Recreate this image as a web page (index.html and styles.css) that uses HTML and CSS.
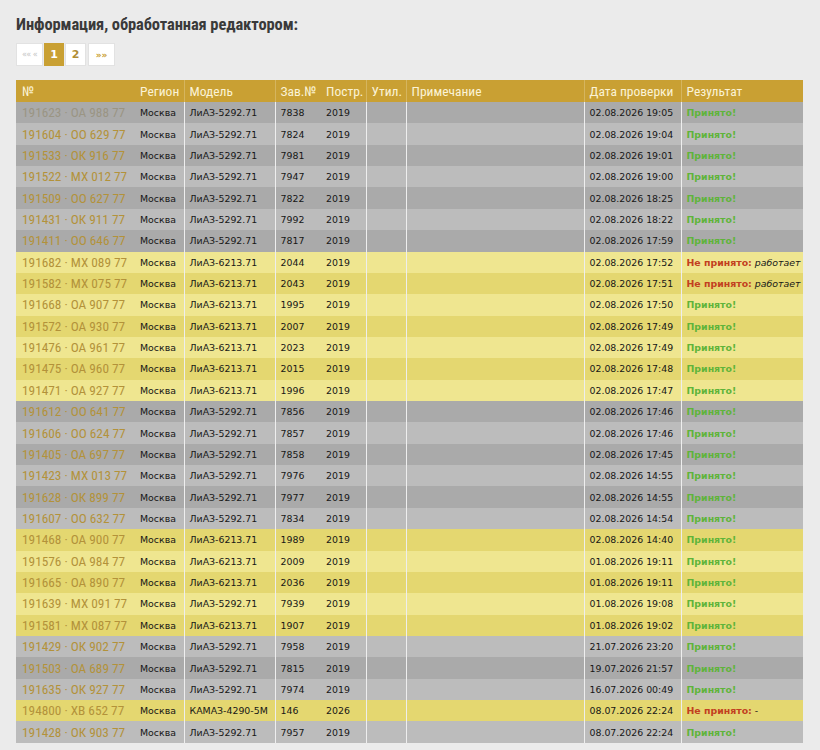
FILE: index.html
```html
<!DOCTYPE html>
<html lang="ru">
<head>
<meta charset="utf-8">
<title>Информация, обработанная редактором</title>
<link rel="stylesheet" href="styles.css">
</head>
<body>
<h2 class="title">Информация, обработанная редактором:</h2>
<div class="pager">
  <span class="pg pg-off">«« «</span>
  <span class="pg pg-cur">1</span>
  <a class="pg pg-num" href="#">2</a>
  <a class="pg pg-next" href="#">»»</a>
</div>
<table class="grid">
  <colgroup>
    <col class="c-no"><col class="c-reg"><col class="c-mod"><col class="c-zav"><col class="c-year"><col class="c-util"><col class="c-note"><col class="c-date"><col class="c-res">
  </colgroup>
  <thead>
    <tr><th>№</th><th>Регион</th><th class="sep">Модель</th><th class="sep">Зав.№</th><th>Постр.</th><th class="sep">Утил.</th><th class="sep">Примечание</th><th class="sep">Дата проверки</th><th class="sep">Результат</th></tr>
  </thead>
  <tbody>
    <tr class="g d"><td class="no"><a class="visited" href="#">191623 · ОА 988 77</a></td><td>Москва</td><td class="sep">ЛиАЗ-5292.71</td><td class="sep">7838</td><td>2019</td><td class="sep"></td><td class="sep"></td><td class="sep">02.08.2026 19:05</td><td class="sep ok">Принято!</td></tr>
    <tr class="g l"><td class="no"><a href="#">191604 · ОО 629 77</a></td><td>Москва</td><td class="sep">ЛиАЗ-5292.71</td><td class="sep">7824</td><td>2019</td><td class="sep"></td><td class="sep"></td><td class="sep">02.08.2026 19:04</td><td class="sep ok">Принято!</td></tr>
    <tr class="g d"><td class="no"><a href="#">191533 · ОК 916 77</a></td><td>Москва</td><td class="sep">ЛиАЗ-5292.71</td><td class="sep">7981</td><td>2019</td><td class="sep"></td><td class="sep"></td><td class="sep">02.08.2026 19:01</td><td class="sep ok">Принято!</td></tr>
    <tr class="g l"><td class="no"><a href="#">191522 · МХ 012 77</a></td><td>Москва</td><td class="sep">ЛиАЗ-5292.71</td><td class="sep">7947</td><td>2019</td><td class="sep"></td><td class="sep"></td><td class="sep">02.08.2026 19:00</td><td class="sep ok">Принято!</td></tr>
    <tr class="g d"><td class="no"><a href="#">191509 · ОО 627 77</a></td><td>Москва</td><td class="sep">ЛиАЗ-5292.71</td><td class="sep">7822</td><td>2019</td><td class="sep"></td><td class="sep"></td><td class="sep">02.08.2026 18:25</td><td class="sep ok">Принято!</td></tr>
    <tr class="g l"><td class="no"><a href="#">191431 · ОК 911 77</a></td><td>Москва</td><td class="sep">ЛиАЗ-5292.71</td><td class="sep">7992</td><td>2019</td><td class="sep"></td><td class="sep"></td><td class="sep">02.08.2026 18:22</td><td class="sep ok">Принято!</td></tr>
    <tr class="g d"><td class="no"><a href="#">191411 · ОО 646 77</a></td><td>Москва</td><td class="sep">ЛиАЗ-5292.71</td><td class="sep">7817</td><td>2019</td><td class="sep"></td><td class="sep"></td><td class="sep">02.08.2026 17:59</td><td class="sep ok">Принято!</td></tr>
    <tr class="y l"><td class="no"><a href="#">191682 · МХ 089 77</a></td><td>Москва</td><td class="sep">ЛиАЗ-6213.71</td><td class="sep">2044</td><td>2019</td><td class="sep"></td><td class="sep"></td><td class="sep">02.08.2026 17:52</td><td class="sep"><b class="no-ok">Не принято:</b> <i>работает</i></td></tr>
    <tr class="y d"><td class="no"><a href="#">191582 · МХ 075 77</a></td><td>Москва</td><td class="sep">ЛиАЗ-6213.71</td><td class="sep">2043</td><td>2019</td><td class="sep"></td><td class="sep"></td><td class="sep">02.08.2026 17:51</td><td class="sep"><b class="no-ok">Не принято:</b> <i>работает</i></td></tr>
    <tr class="y l"><td class="no"><a href="#">191668 · ОА 907 77</a></td><td>Москва</td><td class="sep">ЛиАЗ-6213.71</td><td class="sep">1995</td><td>2019</td><td class="sep"></td><td class="sep"></td><td class="sep">02.08.2026 17:50</td><td class="sep ok">Принято!</td></tr>
    <tr class="y d"><td class="no"><a href="#">191572 · ОА 930 77</a></td><td>Москва</td><td class="sep">ЛиАЗ-6213.71</td><td class="sep">2007</td><td>2019</td><td class="sep"></td><td class="sep"></td><td class="sep">02.08.2026 17:49</td><td class="sep ok">Принято!</td></tr>
    <tr class="y l"><td class="no"><a href="#">191476 · ОА 961 77</a></td><td>Москва</td><td class="sep">ЛиАЗ-6213.71</td><td class="sep">2023</td><td>2019</td><td class="sep"></td><td class="sep"></td><td class="sep">02.08.2026 17:49</td><td class="sep ok">Принято!</td></tr>
    <tr class="y d"><td class="no"><a href="#">191475 · ОА 960 77</a></td><td>Москва</td><td class="sep">ЛиАЗ-6213.71</td><td class="sep">2015</td><td>2019</td><td class="sep"></td><td class="sep"></td><td class="sep">02.08.2026 17:48</td><td class="sep ok">Принято!</td></tr>
    <tr class="y l"><td class="no"><a href="#">191471 · ОА 927 77</a></td><td>Москва</td><td class="sep">ЛиАЗ-6213.71</td><td class="sep">1996</td><td>2019</td><td class="sep"></td><td class="sep"></td><td class="sep">02.08.2026 17:47</td><td class="sep ok">Принято!</td></tr>
    <tr class="g d"><td class="no"><a href="#">191612 · ОО 641 77</a></td><td>Москва</td><td class="sep">ЛиАЗ-5292.71</td><td class="sep">7856</td><td>2019</td><td class="sep"></td><td class="sep"></td><td class="sep">02.08.2026 17:46</td><td class="sep ok">Принято!</td></tr>
    <tr class="g l"><td class="no"><a href="#">191606 · ОО 624 77</a></td><td>Москва</td><td class="sep">ЛиАЗ-5292.71</td><td class="sep">7857</td><td>2019</td><td class="sep"></td><td class="sep"></td><td class="sep">02.08.2026 17:46</td><td class="sep ok">Принято!</td></tr>
    <tr class="g d"><td class="no"><a href="#">191405 · ОА 697 77</a></td><td>Москва</td><td class="sep">ЛиАЗ-5292.71</td><td class="sep">7858</td><td>2019</td><td class="sep"></td><td class="sep"></td><td class="sep">02.08.2026 17:45</td><td class="sep ok">Принято!</td></tr>
    <tr class="g l"><td class="no"><a href="#">191423 · МХ 013 77</a></td><td>Москва</td><td class="sep">ЛиАЗ-5292.71</td><td class="sep">7976</td><td>2019</td><td class="sep"></td><td class="sep"></td><td class="sep">02.08.2026 14:55</td><td class="sep ok">Принято!</td></tr>
    <tr class="g d"><td class="no"><a href="#">191628 · ОК 899 77</a></td><td>Москва</td><td class="sep">ЛиАЗ-5292.71</td><td class="sep">7977</td><td>2019</td><td class="sep"></td><td class="sep"></td><td class="sep">02.08.2026 14:55</td><td class="sep ok">Принято!</td></tr>
    <tr class="g l"><td class="no"><a href="#">191607 · ОО 632 77</a></td><td>Москва</td><td class="sep">ЛиАЗ-5292.71</td><td class="sep">7834</td><td>2019</td><td class="sep"></td><td class="sep"></td><td class="sep">02.08.2026 14:54</td><td class="sep ok">Принято!</td></tr>
    <tr class="y d"><td class="no"><a href="#">191468 · ОА 900 77</a></td><td>Москва</td><td class="sep">ЛиАЗ-6213.71</td><td class="sep">1989</td><td>2019</td><td class="sep"></td><td class="sep"></td><td class="sep">02.08.2026 14:40</td><td class="sep ok">Принято!</td></tr>
    <tr class="y l"><td class="no"><a href="#">191576 · ОА 984 77</a></td><td>Москва</td><td class="sep">ЛиАЗ-6213.71</td><td class="sep">2009</td><td>2019</td><td class="sep"></td><td class="sep"></td><td class="sep">01.08.2026 19:11</td><td class="sep ok">Принято!</td></tr>
    <tr class="y d"><td class="no"><a href="#">191665 · ОА 890 77</a></td><td>Москва</td><td class="sep">ЛиАЗ-6213.71</td><td class="sep">2036</td><td>2019</td><td class="sep"></td><td class="sep"></td><td class="sep">01.08.2026 19:11</td><td class="sep ok">Принято!</td></tr>
    <tr class="y l"><td class="no"><a href="#">191639 · МХ 091 77</a></td><td>Москва</td><td class="sep">ЛиАЗ-5292.71</td><td class="sep">7939</td><td>2019</td><td class="sep"></td><td class="sep"></td><td class="sep">01.08.2026 19:08</td><td class="sep ok">Принято!</td></tr>
    <tr class="y d"><td class="no"><a href="#">191581 · МХ 087 77</a></td><td>Москва</td><td class="sep">ЛиАЗ-6213.71</td><td class="sep">1907</td><td>2019</td><td class="sep"></td><td class="sep"></td><td class="sep">01.08.2026 19:02</td><td class="sep ok">Принято!</td></tr>
    <tr class="g l"><td class="no"><a href="#">191429 · ОК 902 77</a></td><td>Москва</td><td class="sep">ЛиАЗ-5292.71</td><td class="sep">7958</td><td>2019</td><td class="sep"></td><td class="sep"></td><td class="sep">21.07.2026 23:20</td><td class="sep ok">Принято!</td></tr>
    <tr class="g d"><td class="no"><a href="#">191503 · ОА 689 77</a></td><td>Москва</td><td class="sep">ЛиАЗ-5292.71</td><td class="sep">7815</td><td>2019</td><td class="sep"></td><td class="sep"></td><td class="sep">19.07.2026 21:57</td><td class="sep ok">Принято!</td></tr>
    <tr class="g l"><td class="no"><a href="#">191635 · ОК 927 77</a></td><td>Москва</td><td class="sep">ЛиАЗ-5292.71</td><td class="sep">7974</td><td>2019</td><td class="sep"></td><td class="sep"></td><td class="sep">16.07.2026 00:49</td><td class="sep ok">Принято!</td></tr>
    <tr class="y d"><td class="no"><a href="#">194800 · ХВ 652 77</a></td><td>Москва</td><td class="sep">КАМАЗ-4290-5М</td><td class="sep">146</td><td>2026</td><td class="sep"></td><td class="sep"></td><td class="sep">08.07.2026 22:24</td><td class="sep"><b class="no-ok">Не принято:</b> -</td></tr>
    <tr class="g l"><td class="no"><a href="#">191428 · ОК 903 77</a></td><td>Москва</td><td class="sep">ЛиАЗ-5292.71</td><td class="sep">7957</td><td>2019</td><td class="sep"></td><td class="sep"></td><td class="sep">08.07.2026 22:24</td><td class="sep ok">Принято!</td></tr>
  </tbody>
</table>
</body>
</html>
```
FILE: styles.css
```css
html, body {
  margin: 0;
  padding: 0;
  background: #ebebeb;
}
body {
  padding: 15px 16px 0 16px;
  font-family: "DejaVu Sans", Verdana, sans-serif;
  color: #222;
}
.title {
  margin: 0 0 8px 0;
  font-family: "Liberation Sans Narrow", "Roboto Condensed", "Liberation Sans", sans-serif;
  font-weight: bold;
  font-size: 16.5px;
  line-height: 20px;
  color: #3a3a3a;
  letter-spacing: -0.1px;
}
.pager {
  display: flex;
  gap: 1px;
  height: 23px;
  margin-bottom: 14px;
}
.pg {
  display: flex;
  align-items: center;
  justify-content: center;
  background: #fff;
  border: 1px solid #e2e2e2;
  box-sizing: border-box;
  text-decoration: none;
  font-family: "DejaVu Sans", sans-serif;
  font-weight: bold;
}
.pg-off {
  width: 27px;
  color: #c4c4c4;
  font-size: 8px;
  font-weight: normal;
  letter-spacing: -0.5px;
}
.pg-cur {
  width: 20px;
  background: #c9a033;
  border-color: #c9a033;
  color: #fff;
  font-size: 11px;
}
.pg-num {
  width: 21px;
  color: #b08e35;
  font-size: 11px;
}
.pg-next {
  width: 27px;
  margin-left: 1px;
  color: #c9a033;
  font-size: 9px;
}
.grid {
  width: 787px;
  table-layout: fixed;
  border-collapse: collapse;
  border-spacing: 0;
}
.c-no { width: 119px; }
.c-reg { width: 49px; }
.c-mod { width: 91px; }
.c-zav { width: 46px; }
.c-year { width: 45px; }
.c-util { width: 40px; }
.c-note { width: 178px; }
.c-date { width: 97px; }
.c-res { width: 122px; }
.grid th {
  background: #c9a033;
  color: #fbf3d6;
  font-family: "Liberation Sans Narrow", "Roboto Condensed", "Liberation Sans", sans-serif;
  font-weight: normal;
  font-size: 13.5px;
  text-align: left;
  height: 22px;
  padding: 0 5px;
  white-space: nowrap;
}
.grid th:first-child { padding-left: 6px; }
.grid td {
  height: 21.37px;
  padding: 0 5px;
  font-size: 9.4px;
  white-space: nowrap;
  overflow: hidden;
  color: #161616;
}
.grid .sep { border-left: 1px solid rgba(255, 255, 255, 0.16); }
.grid th.sep { border-left: 1px solid rgba(255, 255, 255, 0.22); }
.g.d td { background: #aaaaaa; }
.g.l td { background: #bcbcbc; }
.y.l td { background: #efe690; }
.y.d td { background: #e4d770; }
.grid td.no {
  padding-left: 6px;
  font-family: "Liberation Sans Narrow", "Roboto Condensed", "Liberation Sans", sans-serif;
  font-size: 13.3px;
}
.no a {
  color: #b3923a;
  text-decoration: none;
}
.no a.visited { color: #9a9584; }
.grid td.ok {
  color: #5fb43a;
  font-weight: bold;
}
.no-ok {
  color: #c24020;
  font-weight: bold;
}
.grid td i { font-style: italic; }
```
